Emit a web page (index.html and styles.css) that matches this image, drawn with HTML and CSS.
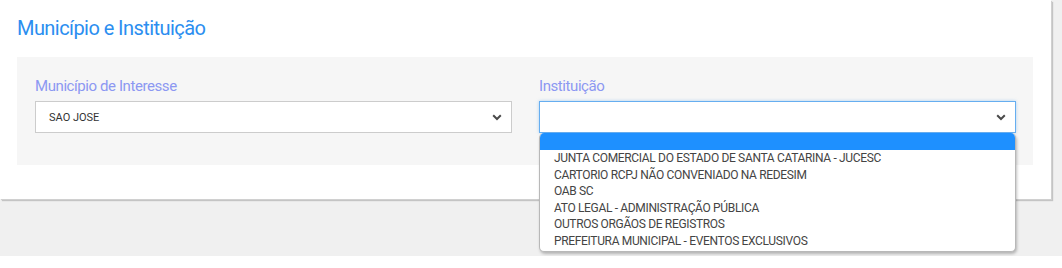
FILE: index.html
```html
<!DOCTYPE html>
<html lang="pt-BR">

<head>
    <meta charset="UTF-8">
    <title>Município e Instituição</title>
    <link rel="stylesheet" href="styles.css">
</head>

<body>
    <div class="page">
        <div class="card">
            <h2 class="card-title">Município e Instituição</h2>
            <div class="panel">
                <div class="field">
                    <label class="field-label">Município de Interesse</label>
                    <div class="select">
                        <span class="select-value">SAO JOSE</span>
                        <svg class="chevron" width="10" height="7" viewBox="0 0 10 7">
                            <polyline points="1.2,1.3 5,5 8.8,1.3" fill="none" stroke="#4a4a4a" stroke-width="2" />
                        </svg>
                    </div>
                </div>
                <div class="field">
                    <label class="field-label">Instituição</label>
                    <div class="select focused">
                        <span class="select-value"></span>
                        <svg class="chevron" width="10" height="7" viewBox="0 0 10 7">
                            <polyline points="1.2,1.3 5,5 8.8,1.3" fill="none" stroke="#4a4a4a" stroke-width="2" />
                        </svg>
                    </div>
                    <ul class="options">
                        <li class="option active"></li>
                        <li class="option">JUNTA COMERCIAL DO ESTADO DE SANTA CATARINA - JUCESC</li>
                        <li class="option">CARTORIO RCPJ NÃO CONVENIADO NA REDESIM</li>
                        <li class="option">OAB SC</li>
                        <li class="option">ATO LEGAL - ADMINISTRAÇÃO PÚBLICA</li>
                        <li class="option">OUTROS ORGÃOS DE REGISTROS</li>
                        <li class="option">PREFEITURA MUNICIPAL - EVENTOS EXCLUSIVOS</li>
                    </ul>
                </div>
            </div>
        </div>
    </div>
</body>

</html>
```

FILE: styles.css
```css
body {
    margin: 0;
    background-color: #fff;
    font-family: Roboto, "Liberation Sans", sans-serif;
}

.page {
    height: 256px;
    background-color: #f0f0f0;
}

.card {
    box-sizing: border-box;
    width: 1051px;
    height: 199px;
    padding: 16px 18px 0 17px;
    background-color: #fff;
    box-shadow: 1px 1px 0 #d0d0d0, 2px 2px 1px #c4c4c4;
}

.card-title {
    margin: 0;
    font-size: 20px;
    line-height: 24px;
    font-weight: 400;
    letter-spacing: -0.028em;
    color: #2b8ef0;
}

.panel {
    display: flex;
    gap: 27px;
    box-sizing: border-box;
    width: 1016px;
    height: 108px;
    margin-top: 17px;
    padding: 20px 17px 0 18px;
    background-color: #f6f6f6;
}

.field {
    position: relative;
    flex: 1;
}

.field-label {
    display: block;
    font-size: 15px;
    line-height: 18px;
    letter-spacing: -0.028em;
    color: #8c98f2;
    margin-bottom: 6px;
}

.select {
    display: flex;
    align-items: center;
    justify-content: space-between;
    box-sizing: border-box;
    height: 32px;
    padding: 0 9px 0 13px;
    background-color: #fff;
    border: 1px solid #ccc;
}

.select.focused {
    border-color: #66aef0;
    box-shadow: 0 0 3px rgba(102, 174, 240, 0.5);
}

.select-value {
    font-size: 11px;
    color: #333;
}

.chevron {
    display: block;
}

.options {
    position: absolute;
    top: 56px;
    left: 0;
    right: 0;
    margin: 0;
    padding: 0 0 1px;
    list-style: none;
    background-color: #fff;
    border: 1px solid #b8b8b8;
    border-top: none;
    border-radius: 5px;
    overflow: hidden;
    box-shadow: 1px 2px 3px rgba(0, 0, 0, 0.25);
    z-index: 10;
}

.option {
    height: 16.6px;
    line-height: 16.6px;
    padding-left: 14px;
    font-size: 12px;
    letter-spacing: -0.028em;
    color: #444;
    white-space: nowrap;
}

.option.active {
    height: 17px;
    background-color: #1e90ff;
}
```
